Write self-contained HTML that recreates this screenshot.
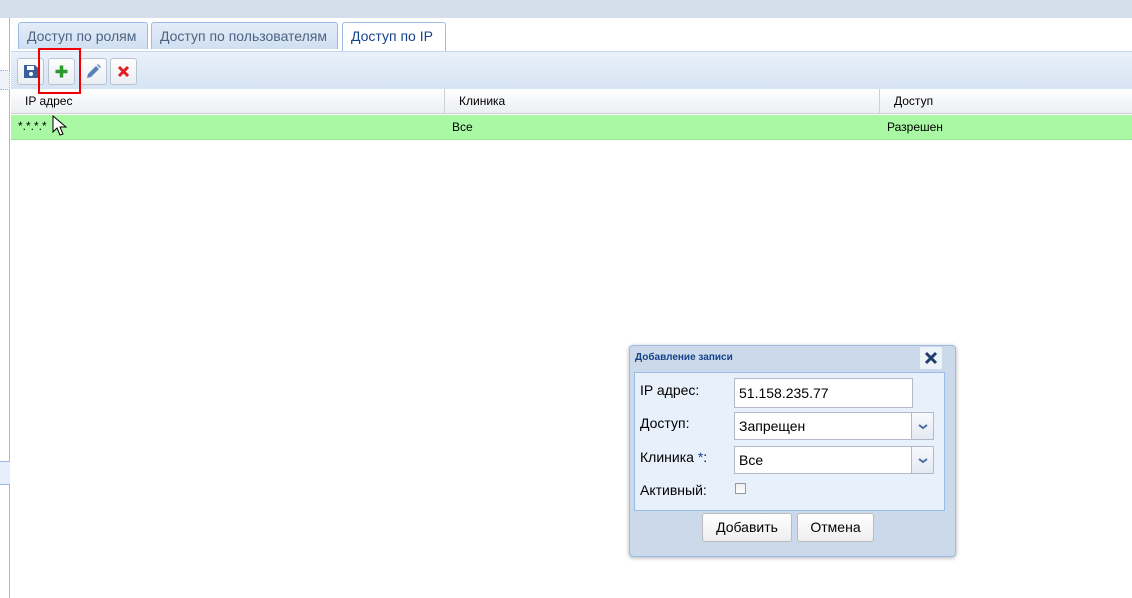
<!DOCTYPE html>
<html><head><meta charset="utf-8"><style>
*{box-sizing:border-box;margin:0;padding:0}
body{width:1132px;height:598px;overflow:hidden;background:#fff;font-family:"Liberation Sans","DejaVu Sans",sans-serif;font-size:12px;position:relative}
.a{position:absolute}
.tab{position:absolute;top:22px;height:27px;border:1px solid #99bbe8;border-bottom:none;border-radius:3px 3px 0 0;background:linear-gradient(#e4edf8,#cfdff2);color:#4e6383;font-size:14px;padding:5px 8px 0 8px;white-space:nowrap}
.btn{position:absolute;top:58px;width:27px;height:27px;border:1px solid #b9c4d1;border-radius:3px;background:linear-gradient(#fdfdfd,#eaeef3)}
.lbl{position:absolute;font-size:14px;color:#000}
.g{font-size:12px}
.inp{position:absolute;background:#fff;border:1px solid #b5b8c8;font-size:14px;padding:0 0 0 4px}
.trg{position:absolute;right:0;top:0;width:22px;height:100%;border-left:1px solid #b5b8c8;background:linear-gradient(#f7f9fc,#e4eaf2)}
.dbtn{position:absolute;top:513px;height:29px;border:1px solid #bbb;border-radius:3px;background:linear-gradient(#fff,#eee);font-size:14px;text-align:center;line-height:27px}
</style></head><body>
<div class="a" style="left:0;top:0;width:1132px;height:18px;background:#d5dfeb"></div>
<div class="a" style="left:0;top:18px;width:10px;height:580px;background:#fff;border-right:1px solid #99bbe8"></div>
<div class="a" style="left:0;top:70px;width:10px;height:20px;border:1px dotted #99bbe8;border-left:none;background:#eef3fa"></div>
<div class="a" style="left:0;top:461px;width:10px;height:24px;background:#e6eefa;border-top:1px solid #99bbe8;border-bottom:1px solid #99bbe8"></div>
<div class="a" style="left:11px;top:18px;width:1121px;height:34px;background:#fff;border-bottom:1px solid #99bbe8"></div>
<div class="tab" style="left:18px;width:130px">Доступ по ролям</div>
<div class="tab" style="left:151px;width:187px">Доступ по пользователям</div>
<div class="tab" style="left:342px;width:104px;background:#fff;color:#15428b;height:29px">Доступ по IP</div>
<div class="a" style="left:11px;top:51px;width:1121px;height:38px;background:linear-gradient(#eaf1fb,#d6e3f3);border-top:1px solid #c5d6ee"></div>
<div class="btn" style="left:17px"><svg width="25" height="25" viewBox="0 0 25 25"><path d="M6 6h11l3 3v10H6z" fill="#3a5f9b"/><rect x="9" y="7" width="7" height="4" fill="#fff"/><circle cx="13" cy="15" r="2" fill="#fff"/></svg></div>
<div class="btn" style="left:48px"><svg width="25" height="25" viewBox="0 0 25 25"><path d="M12.5 6.5v12M6.5 12.5h12" stroke="#2a9a2a" stroke-width="3.5"/></svg></div>
<div class="btn" style="left:80px"><svg width="25" height="25" viewBox="0 0 25 25"><path d="M6 19l1-4 8-8 3 3-8 8z" fill="#5b80b8"/><path d="M16 6l3 3 1-1-3-3z" fill="#5b80b8"/></svg></div>
<div class="btn" style="left:110px"><svg width="25" height="25" viewBox="0 0 25 25"><path d="M8 8l9 9M17 8l-9 9" stroke="#e02020" stroke-width="3"/></svg></div>
<div class="a" style="left:11px;top:89px;width:1121px;height:25px;background:linear-gradient(#fff,#eceef2);border-bottom:1px solid #d0d0d0"></div>
<div class="a" style="left:444px;top:89px;width:1px;height:25px;background:#d0d0d0"></div>
<div class="a" style="left:879px;top:89px;width:1px;height:25px;background:#d0d0d0"></div>
<div class="lbl g" style="left:25px;top:94px">IP адрес</div>
<div class="lbl g" style="left:459px;top:94px">Клиника</div>
<div class="lbl g" style="left:894px;top:94px">Доступ</div>
<div class="a" style="left:11px;top:115px;width:1121px;height:25px;background:#a8f8a4;border-bottom:1px dotted #99bbe8"></div>
<div class="lbl g" style="left:18px;top:119px">*.*.*.*</div>
<div class="lbl g" style="left:452px;top:120px">Все</div>
<div class="lbl g" style="left:887px;top:120px">Разрешен</div>
<svg class="a" style="left:52px;top:115px" width="16" height="22" viewBox="0 0 16 22"><path d="M1 1v16l4-4 3 7 3-1-3-7h6z" fill="#fff" stroke="#000"/></svg>
<div class="a" style="left:38px;top:48px;width:43px;height:46px;border:2px solid #e00;z-index:10"></div>

<div class="a" style="left:629px;top:345px;width:327px;height:212px;background:#cbd9ea;border:1px solid #99bbe8;border-radius:4px;box-shadow:0 1px 4px rgba(0,0,0,.3)"></div>
<div class="lbl" style="left:635px;top:352px;font-size:10px;font-weight:bold;color:#15428b">Добавление записи</div>
<div class="a" style="left:920px;top:347px;width:22px;height:22px;background:#eef3fa;border-radius:2px"><svg width="22" height="22" viewBox="0 0 22 22"><path d="M6 6l10 10M16 6L6 16" stroke="#1f3d6b" stroke-width="3"/></svg></div>
<div class="a" style="left:634px;top:372px;width:311px;height:139px;background:#e8f0fb;border:1px solid #99bbe8"></div>
<div class="lbl" style="left:640px;top:382px">IP адрес:</div>
<div class="inp" style="left:734px;top:378px;width:179px;height:30px;line-height:29px">51.158.235.77</div>
<div class="lbl" style="left:640px;top:415px">Доступ:</div>
<div class="inp" style="left:734px;top:412px;width:200px;height:28px;line-height:27px">Запрещен<div class="trg"><svg width="22" height="26" viewBox="0 0 22 26"><path d="M7 12l4 3 4-3" stroke="#4a6fa5" stroke-width="2" fill="none"/></svg></div></div>
<div class="lbl" style="left:640px;top:449px">Клиника <span style="color:#15428b">*</span>:</div>
<div class="inp" style="left:734px;top:446px;width:200px;height:28px;line-height:27px">Все<div class="trg"><svg width="22" height="26" viewBox="0 0 22 26"><path d="M7 12l4 3 4-3" stroke="#4a6fa5" stroke-width="2" fill="none"/></svg></div></div>
<div class="lbl" style="left:640px;top:482px">Активный:</div>
<div class="a" style="left:735px;top:483px;width:11px;height:11px;border:1px solid #999;background:linear-gradient(#eee,#fff)"></div>
<div class="dbtn" style="left:702px;width:90px">Добавить</div>
<div class="dbtn" style="left:797px;width:77px">Отмена</div>
</body></html>
